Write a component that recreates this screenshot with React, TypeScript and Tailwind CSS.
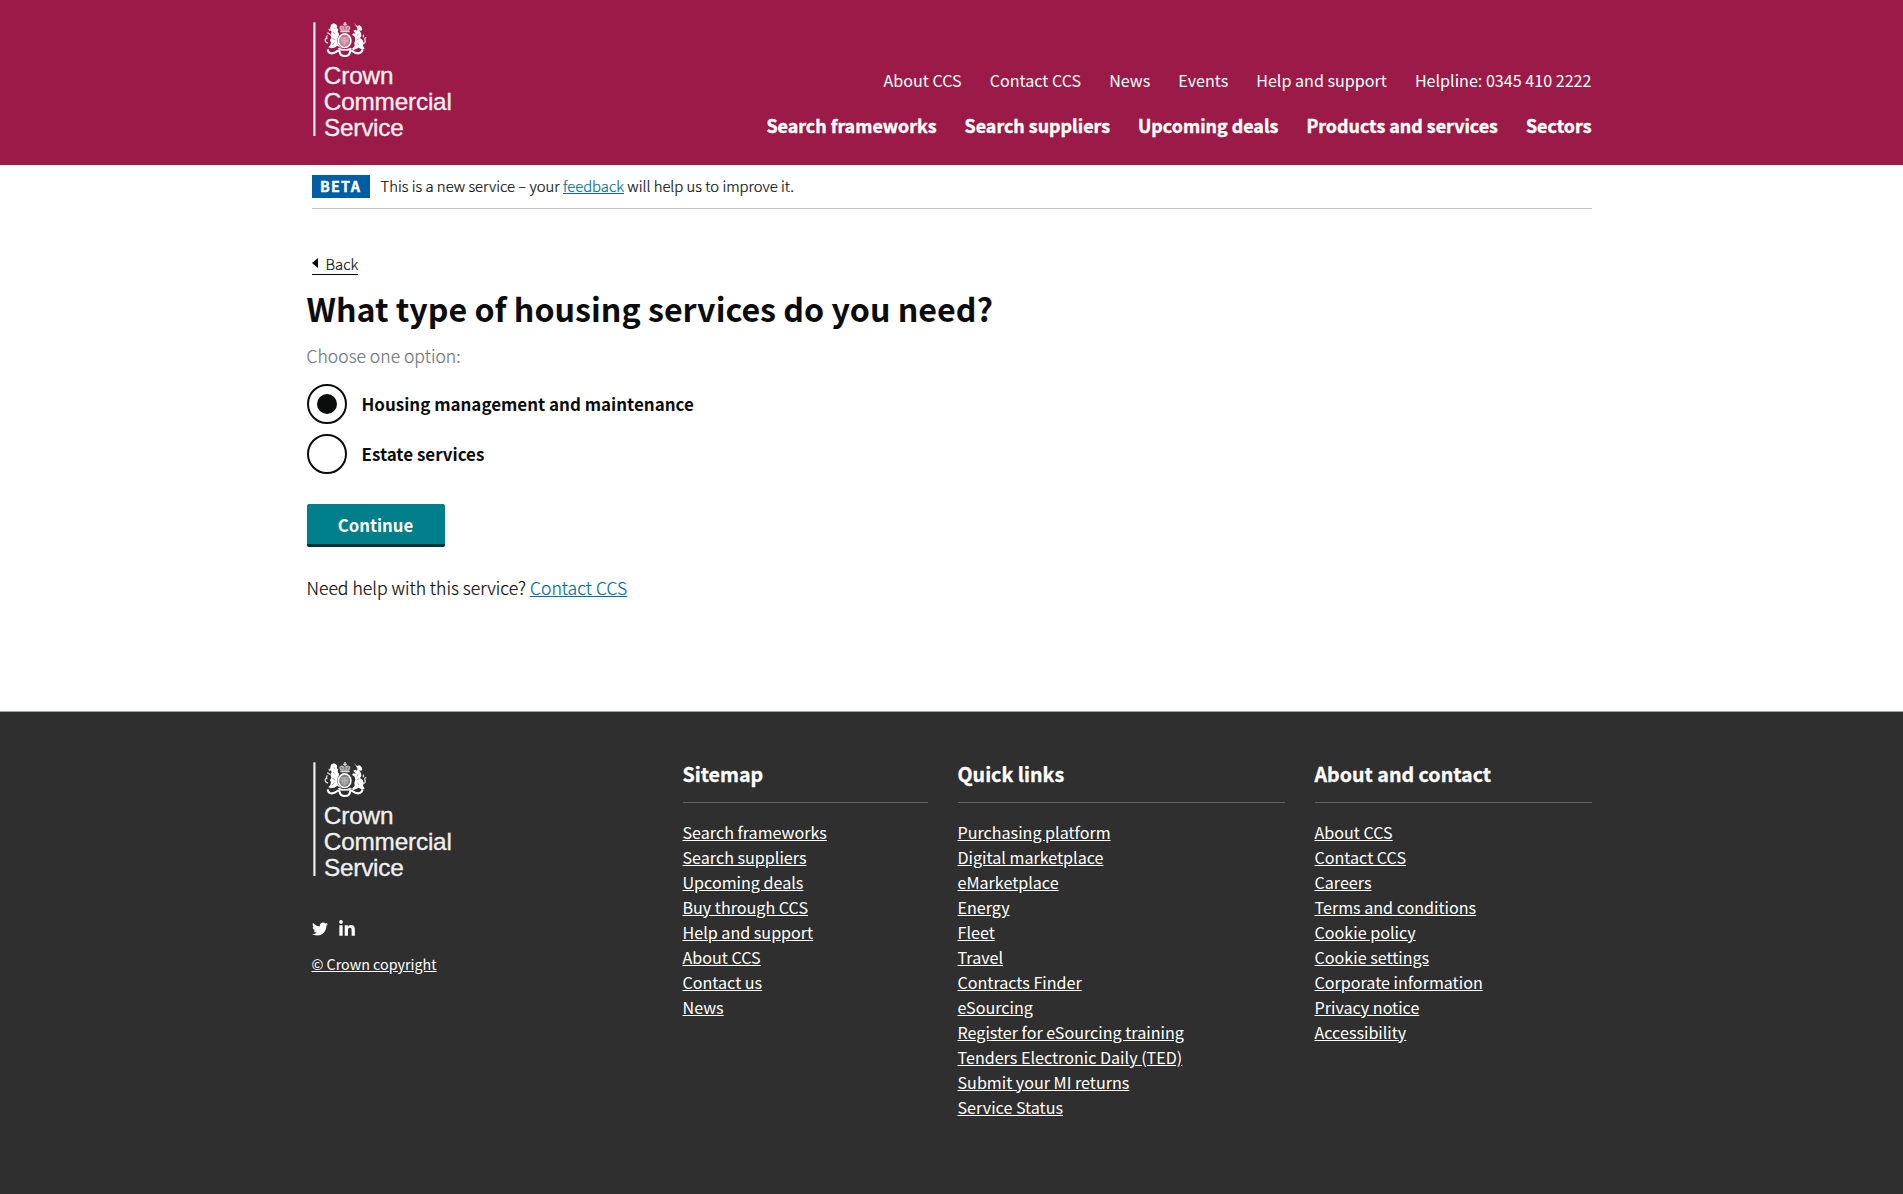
import { FaLinkedinIn, FaTwitter } from "react-icons/fa";

const topLinks = ["About CCS", "Contact CCS", "News", "Events", "Help and support", "Helpline: 0345 410 2222"];
const mainLinks = ["Search frameworks", "Search suppliers", "Upcoming deals", "Products and services", "Sectors"];

const footerColumns = [
  {
    title: "Sitemap",
    width: "w-[245px]",
    links: ["Search frameworks", "Search suppliers", "Upcoming deals", "Buy through CCS", "Help and support", "About CCS", "Contact us", "News"],
  },
  {
    title: "Quick links",
    width: "w-[327px]",
    links: [
      "Purchasing platform",
      "Digital marketplace",
      "eMarketplace",
      "Energy",
      "Fleet",
      "Travel",
      "Contracts Finder",
      "eSourcing",
      "Register for eSourcing training",
      "Tenders Electronic Daily (TED)",
      "Submit your MI returns",
      "Service Status",
    ],
  },
  {
    title: "About and contact",
    width: "w-[277px]",
    links: [
      "About CCS",
      "Contact CCS",
      "Careers",
      "Terms and conditions",
      "Cookie policy",
      "Cookie settings",
      "Corporate information",
      "Privacy notice",
      "Accessibility",
    ],
  },
];

function Logo({ ground }: { ground: string }) {
  return (
    <svg className="block h-[120px] w-[143px]" viewBox="36 60 429 360" fill="#fff" role="img" aria-label="Crown Commercial Service">
      <rect x="40" y="67" width="6.5" height="341" opacity="0.92" />
      {/* crown */}
      <g>
        <path d="M133 66h4v5h4v3h-4v4h-4v-4h-4v-3h4z" opacity="0.85" />
        <path d="M118 80q8-7 16 0q8-7 17 0q2 4-4 12h-25q-6-8-4-12z" opacity="0.6" />
        <path d="M121 92h28v5h-28z" opacity="0.8" />
        <path d="M124 82l4 7M145 82l-4 7M134.500 80v9" stroke={ground} strokeWidth="2" opacity="0.7" />
      </g>
      {/* lion */}
      <path d="M93 74l8-4 7 3 4 6-2 5 5 4-2 7 4 6-1 10 4 9-1 10 7 10-5 3-9-6-9 6-10 2-8-3 6-7 2-8-3-6 4-8-3-9 4-8-5-8z" />
      <path d="M84 129q-10-3-8-11q2-4 6-2q-6-6 1-9M90 103l-8-5M91 92l-5-5" fill="none" stroke="#fff" strokeWidth="4" opacity="0.8" />
      <path d="M101 83l5 3M99 96l6 7M97 115l9 5M103 127l-6 8" stroke={ground} strokeWidth="2.500" opacity="0.5" />
      {/* unicorn */}
      <path d="M162 69l9 9 8-2 6 6 2 8-5 2-5-1 6 8 1 9-4 6 8 6 3 9-2 8 5 9-9 2-9-5-8 4-9 4-3-5 8-8-1-10 3-9-2-9-8-6 4-4 7 1-7-9 6-3 5 2 1-7z" />
      <path d="M190 131q8-3 5-12q-2-6 4-7M191 104q-3 5 0 8" fill="none" stroke="#fff" strokeWidth="4" opacity="0.8" />
      <path d="M174 86l-6 8M176 101l-6 8M178 116l-8 4M172 128l5 7" stroke={ground} strokeWidth="2.500" opacity="0.5" />
      {/* garter and shield */}
      <ellipse cx="134" cy="122" rx="22" ry="24" fill={ground} />
      <ellipse cx="134" cy="122" rx="18.500" ry="20.500" fill={ground} stroke="#fff" strokeWidth="5" />
      <ellipse cx="134" cy="122" rx="16" ry="18" opacity="0.4" />
      <path d="M122 111h24v13q-2 9-12 13q-10-4-12-13z" opacity="0.25" />
      <path d="M134 111v25M123 122h22" stroke="#fff" strokeWidth="2" opacity="0.25" />
      {/* motto ribbon */}
      <path
        d="M83 148q2 12 12 12q9 0 17-7q6-3 7 3q1 12 16 12q14 0 15-12q1-7 7-3q8 7 17 7q11 0 14-12"
        fill="none"
        stroke="#fff"
        strokeWidth="6.500"
      />
      <path d="M113 145q5 7 11 7h21q6 0 11-7l-6-2q-6 4-16 4t-15-4z" opacity="0.9" />
      <g className="font-['Liberation_Sans']" fontSize="73" stroke="#fff" strokeWidth="1" opacity="0.93">
        <text x="71.500" y="251" textLength="209">
          Crown
        </text>
        <text x="71.500" y="329" textLength="384">
          Commercial
        </text>
        <text x="72" y="407.500" textLength="239">
          Service
        </text>
      </g>
    </svg>
  );
}

function Radio({ label, checked = false }: { label: string; checked?: boolean }) {
  return (
    <label className="flex h-10 items-center gap-[15px]">
      <span className="flex size-10 items-center justify-center rounded-full border-2 border-[#0b0c0c]">
        {checked && <span className="size-5 rounded-full bg-[#0b0c0c]" />}
      </span>
      <span className="text-[16.97px] leading-6 font-bold">{label}</span>
    </label>
  );
}

export default function App() {
  return (
    <div className="flex h-[1194px] flex-col overflow-hidden bg-white font-['Noto_Sans_CJK_SC',sans-serif] text-[#0b0c0c]">
      <header className="h-[165px] shrink-0 bg-[#9b1a47] text-white">
        <div className="mx-auto flex w-[1280px] justify-between">
          <div className="pt-5">
            <Logo ground="#9b1a47" />
          </div>
          <nav className="flex flex-col items-end gap-[21px] pt-[68px]">
            <ul className="flex gap-7 text-[16.13px] leading-6">
              {topLinks.map((t) => (
                <li key={t}>{t}</li>
              ))}
            </ul>
            <ul className="flex gap-7 text-[17.88px] leading-6 font-bold [-webkit-text-stroke:0.4px]">
              {mainLinks.map((t) => (
                <li key={t}>{t}</li>
              ))}
            </ul>
          </nav>
        </div>
      </header>

      <div className="mx-auto flex h-11 w-[1280px] shrink-0 items-center gap-[11px] border-b border-[#bfc1c3]">
        <strong className="flex h-[23px] w-[58px] items-center justify-center bg-[#005ea5] pb-0.5 text-[14.3px] leading-[21px] font-bold tracking-[1.3px] text-white [-webkit-text-stroke:0.4px]">
          BETA
        </strong>
        <span className="pb-0.5 text-[14.83px] leading-5 font-light [-webkit-text-stroke:0.2px]">
          This is a new service – your <a className="text-[#007194] underline underline-offset-1">feedback</a> will help us to improve it.
        </span>
      </div>

      <div className="mx-auto flex w-[1280px] pt-[44px]">
        <a className="flex h-[22px] items-center gap-2 border-b border-[#0b0c0c] text-[14.83px] leading-[22px] font-light [-webkit-text-stroke:0.2px]">
          <svg className="-mt-0.5 h-2.5 w-1.5" viewBox="0 0 6 10">
            <path d="M0 5L6 0V10Z" fill="#0b0c0c" />
          </svg>
          Back
        </a>
      </div>

      <main className="mx-auto w-[1290px] shrink-0">
        <h1 className="mt-[13px] text-[32.2px] leading-[40px] font-bold">What type of housing services do you need?</h1>
        <p className="mt-[15px] text-[17.55px] leading-[25px] font-light text-[#6f777b] [-webkit-text-stroke:0.2px]">Choose one option:</p>
        <div className="mt-[16px] flex flex-col gap-2.5">
          <Radio label="Housing management and maintenance" checked />
          <Radio label="Estate services" />
        </div>
        <button className="mt-[30px] flex h-[43px] w-[138px] items-center justify-center rounded-xs border-b-[3px] border-[#00333a] bg-[#007e8a] pt-0.5 text-[16.8px] leading-6 font-bold text-white">
          Continue
        </button>
        <p className="mt-[28px] text-[17.6px] leading-[25px] font-light [-webkit-text-stroke:0.2px]">
          Need help with this service? <a className="text-[#007194] underline underline-offset-1">Contact CCS</a>
        </p>
      </main>

      <footer className="mt-auto h-[483px] shrink-0 border-t border-[#a0a5a8] bg-[#2f2f2f] text-white">
        <div className="mx-auto flex w-[1280px] justify-between">
          <div className="pt-12">
            <Logo ground="#2f2f2f" />
            <div className="mt-[40px] flex items-center gap-[10px]">
              <FaTwitter size={16} />
              <FaLinkedinIn size={18} />
            </div>
            <a className="mt-4 block text-[14.3px] leading-5 underline underline-offset-1">© Crown copyright</a>
          </div>
          <div className="flex gap-[30px] pt-[50px]">
            {footerColumns.map((col) => (
              <section key={col.title} className={col.width}>
                <h2 className="h-[41px] border-b border-[#626262] text-[19.65px] leading-[24px] font-bold [-webkit-text-stroke:0.3px]">{col.title}</h2>
                <ul className="mt-[17px] text-[16.13px] leading-[25px]">
                  {col.links.map((t) => (
                    <li key={t}>
                      <a className="underline underline-offset-1">{t}</a>
                    </li>
                  ))}
                </ul>
              </section>
            ))}
          </div>
        </div>
      </footer>
    </div>
  );
}
